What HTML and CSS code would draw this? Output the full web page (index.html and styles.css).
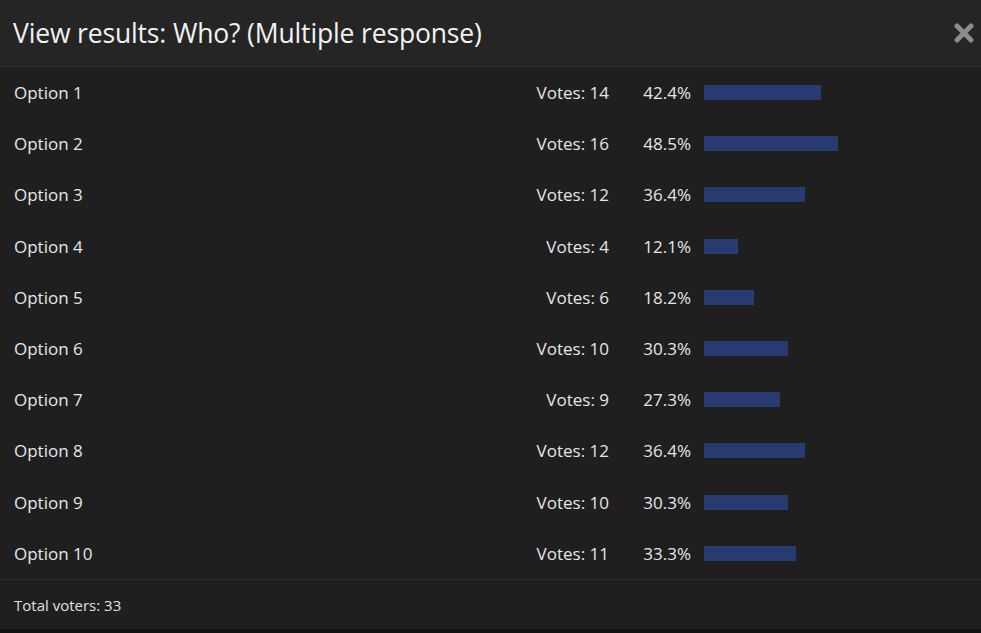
FILE: index.html
```html
<!DOCTYPE html>
<html lang="en">
  <head>
    <meta charset="UTF-8" />
    <title>View results</title>
    <link rel="stylesheet" href="styles.css">
  </head>
  <body>
    <div class="overlay">
      <div class="overlayHeader">
        <h2 class="overlayTitle">View results: Who? (Multiple response)</h2>
        <button class="closeBtn" aria-label="Close">
          <svg width="20" height="20" viewBox="0 0 20 20">
            <path d="M3 3 L17 17 M17 3 L3 17" stroke="#8c8c8c" stroke-width="5" stroke-linecap="round" />
          </svg>
        </button>
      </div>
      <ul class="pollResults">
        <li class="pollRow">
          <span class="pollLabel">Option 1</span>
          <span class="pollVotes">Votes: 14</span>
          <span class="pollPercent">42.4%</span>
          <span class="pollBar"><i style="width: 42.4%"></i></span>
        </li>
        <li class="pollRow">
          <span class="pollLabel">Option 2</span>
          <span class="pollVotes">Votes: 16</span>
          <span class="pollPercent">48.5%</span>
          <span class="pollBar"><i style="width: 48.5%"></i></span>
        </li>
        <li class="pollRow">
          <span class="pollLabel">Option 3</span>
          <span class="pollVotes">Votes: 12</span>
          <span class="pollPercent">36.4%</span>
          <span class="pollBar"><i style="width: 36.4%"></i></span>
        </li>
        <li class="pollRow">
          <span class="pollLabel">Option 4</span>
          <span class="pollVotes">Votes: 4</span>
          <span class="pollPercent">12.1%</span>
          <span class="pollBar"><i style="width: 12.1%"></i></span>
        </li>
        <li class="pollRow">
          <span class="pollLabel">Option 5</span>
          <span class="pollVotes">Votes: 6</span>
          <span class="pollPercent">18.2%</span>
          <span class="pollBar"><i style="width: 18.2%"></i></span>
        </li>
        <li class="pollRow">
          <span class="pollLabel">Option 6</span>
          <span class="pollVotes">Votes: 10</span>
          <span class="pollPercent">30.3%</span>
          <span class="pollBar"><i style="width: 30.3%"></i></span>
        </li>
        <li class="pollRow">
          <span class="pollLabel">Option 7</span>
          <span class="pollVotes">Votes: 9</span>
          <span class="pollPercent">27.3%</span>
          <span class="pollBar"><i style="width: 27.3%"></i></span>
        </li>
        <li class="pollRow">
          <span class="pollLabel">Option 8</span>
          <span class="pollVotes">Votes: 12</span>
          <span class="pollPercent">36.4%</span>
          <span class="pollBar"><i style="width: 36.4%"></i></span>
        </li>
        <li class="pollRow">
          <span class="pollLabel">Option 9</span>
          <span class="pollVotes">Votes: 10</span>
          <span class="pollPercent">30.3%</span>
          <span class="pollBar"><i style="width: 30.3%"></i></span>
        </li>
        <li class="pollRow">
          <span class="pollLabel">Option 10</span>
          <span class="pollVotes">Votes: 11</span>
          <span class="pollPercent">33.3%</span>
          <span class="pollBar"><i style="width: 33.3%"></i></span>
        </li>
      </ul>
      <div class="overlayFooter">Total voters: 33</div>
    </div>
  </body>
</html>
```

FILE: styles.css
```css
body {
  margin: 0;
  background-color: #111111;
  font-family: "Open Sans", "Noto Sans", sans-serif;
  color: #e6e6e6;
}
.overlay {
  width: 981px;
  height: 629px;
  background-color: #1f1f1f;
  display: flex;
  flex-direction: column;
}
.overlayHeader {
  height: 66px;
  display: flex;
  align-items: center;
  justify-content: space-between;
  padding: 0 7px 0 13px;
  background-color: #252525;
  border-bottom: 1px solid #2d2d2d;
}
.overlayTitle {
  margin: 0;
  font-size: 26.5px;
  font-weight: 400;
  color: #f2f2f2;
  letter-spacing: -0.15px;
}
.closeBtn {
  background: none;
  border: 0;
  padding: 0;
  width: 20px;
  height: 20px;
}
.pollResults {
  list-style: none;
  margin: 0;
  padding: 0;
  flex: 1;
}
.pollRow {
  height: 51.2px;
  display: grid;
  grid-template-columns: 1fr auto 82px 290px;
  align-items: center;
  padding-left: 14px;
  font-size: 17px;
}
.pollVotes,
.pollPercent {
  text-align: right;
}
.pollBar {
  display: block;
  height: 15px;
  padding-left: 13px;
}
.pollBar i {
  display: block;
  height: 100%;
  background-color: #283b70;
}
.overlayFooter {
  height: 49px;
  display: flex;
  align-items: center;
  padding-left: 14px;
  border-top: 1px solid #2b2b2b;
  font-size: 15px;
  color: #e0e0e0;
}
```
